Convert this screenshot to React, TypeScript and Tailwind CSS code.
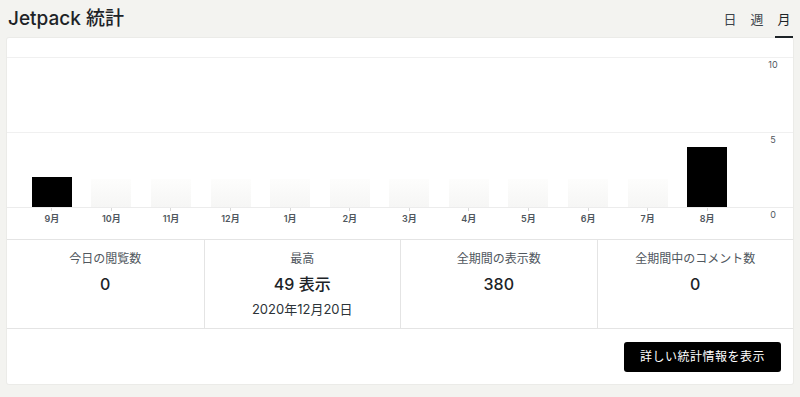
import React from "react";

const months = [
  { label: "9月", value: 2 },
  { label: "10月", value: 0 },
  { label: "11月", value: 0 },
  { label: "12月", value: 0 },
  { label: "1月", value: 0 },
  { label: "2月", value: 0 },
  { label: "3月", value: 0 },
  { label: "4月", value: 0 },
  { label: "5月", value: 0 },
  { label: "6月", value: 0 },
  { label: "7月", value: 0 },
  { label: "8月", value: 4 },
];

const stats = [
  { label: "今日の閲覧数", value: "0" },
  { label: "最高", value: "49 表示", sub: "2020年12月20日" },
  { label: "全期間の表示数", value: "380" },
  { label: "全期間中のコメント数", value: "0" },
];

const font = { fontFamily: 'Inter, "Noto Sans CJK JP", sans-serif' };

function AxisLabel({ children }: { children: React.ReactNode }) {
  return (
    <div className="w-[56px] shrink-0">
      <div className="ml-[26px] w-[20px] pt-[2px] text-center text-[9px] leading-[10px] text-[#50575e]">
        {children}
      </div>
    </div>
  );
}

export default function App() {
  return (
    <div className="h-[397px] w-[800px] overflow-hidden bg-[#f3f3f0]" style={font}>
      <header className="flex h-[38px] items-start justify-between pl-[8px] pr-[7px]">
        <h1 className="pt-[5px] text-[19px] font-medium leading-[28px] text-[#1d2327]">Jetpack 統計</h1>
        <nav className="flex h-full items-end gap-[9px] text-[13px] text-[#3c434a]">
          <span className="w-[18px] border-b-2 border-transparent pb-[7px] text-center">日</span>
          <span className="w-[18px] border-b-2 border-transparent pb-[7px] text-center">週</span>
          <span className="w-[18px] border-b-2 border-[#1d2327] pb-[7px] text-center text-[#1d2327]">月</span>
        </nav>
      </header>

      <section className="mx-[7px] h-[346px] rounded-[2px] bg-white pt-[19px] shadow-[0_0_0_1px_rgba(0,0,0,0.03)]">
        <div className="relative">
          <div className="flex h-[75px] border-t border-[#f0f0f0]">
            <div className="flex-1" />
            <AxisLabel>10</AxisLabel>
          </div>
          <div className="flex h-[75px] border-t border-[#f0f0f0]">
            <div className="flex-1" />
            <AxisLabel>5</AxisLabel>
          </div>
          <div className="absolute inset-y-0 left-[15px] grid w-[715px] grid-cols-12 items-end">
            {months.map((m) =>
              m.value > 0 ? (
                <div key={m.label} className="mx-auto w-[40px] bg-black" style={{ height: m.value * 15 }} />
              ) : (
                <div key={m.label} className="mx-auto h-[28px] w-[40px] bg-gradient-to-b from-[#fdfdfc] to-[#f6f6f5]" />
              )
            )}
          </div>
        </div>

        <div className="flex h-[32px] border-t border-[#ececec]">
          <div className="flex-1 pl-[15px]">
            <div className="grid w-[715px] grid-cols-12">
              {months.map((m) => (
                <div key={m.label} className="flex flex-col items-center">
                  <div className="h-[3px] w-px bg-[#d8d8d8]" />
                  <span className="mt-[3px] text-[9px] font-semibold leading-[10px] text-[#50575e]">{m.label}</span>
                </div>
              ))}
            </div>
          </div>
          <AxisLabel>0</AxisLabel>
        </div>

        <div className="grid h-[90px] grid-cols-4 border-y border-[#e4e4e4]">
          {stats.map((s, i) => (
            <div
              key={s.label}
              className={`flex flex-col items-center pt-[10px] ${i > 0 ? "border-l border-[#e4e4e4]" : ""}`}
            >
              <span className="text-[12px] leading-[18px] text-[#50575e]">{s.label}</span>
              <span className="mt-[4px] text-[16px] font-medium leading-[24px] text-[#1d2327]">{s.value}</span>
              {s.sub && <span className="mt-[4px] text-[13px] leading-[18px] text-[#2c3338]">{s.sub}</span>}
            </div>
          ))}
        </div>

        <div className="flex justify-end pr-[12px] pt-[13px]">
          <button
            type="button"
            className="h-[30px] w-[157px] rounded-[3px] bg-black text-[12px] tracking-[0.5px] text-white"
          >
            詳しい統計情報を表示
          </button>
        </div>
      </section>
    </div>
  );
}
